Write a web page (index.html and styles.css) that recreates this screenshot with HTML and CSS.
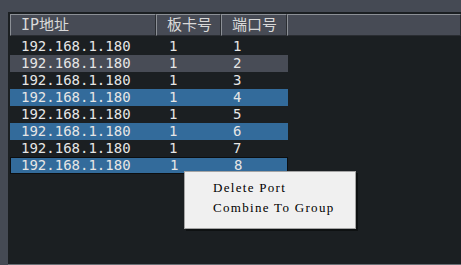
FILE: index.html
```html
<!DOCTYPE html>
<html lang="zh">
  <head>
    <meta charset="UTF-8" />
    <title>Port List</title>
    <link rel="stylesheet" href="styles.css">
  </head>
  <body>
    <div class="panel">
      <div class="head">
        <div class="hcell c-ip">IP地址</div>
        <div class="hcell c-board">板卡号</div>
        <div class="hcell c-port">端口号</div>
        <div class="hcell c-fill"></div>
      </div>

      <div class="rows">
        <div class="row"><span class="c-ip">192.168.1.180</span><span class="c-board">1</span><span class="c-port">1</span></div>
        <div class="row grey"><span class="c-ip">192.168.1.180</span><span class="c-board">1</span><span class="c-port">2</span></div>
        <div class="row"><span class="c-ip">192.168.1.180</span><span class="c-board">1</span><span class="c-port">3</span></div>
        <div class="row sel"><span class="c-ip">192.168.1.180</span><span class="c-board">1</span><span class="c-port">4</span></div>
        <div class="row"><span class="c-ip">192.168.1.180</span><span class="c-board">1</span><span class="c-port">5</span></div>
        <div class="row sel"><span class="c-ip">192.168.1.180</span><span class="c-board">1</span><span class="c-port">6</span></div>
        <div class="row"><span class="c-ip">192.168.1.180</span><span class="c-board">1</span><span class="c-port">7</span></div>
        <div class="row sel focus"><span class="c-ip">192.168.1.180</span><span class="c-board">1</span><span class="c-port">8</span></div>
      </div>
    </div>

    <div class="menu">
      <div class="menu-item">Delete Port</div>
      <div class="menu-item">Combine To Group</div>
    </div>
  </body>
</html>
```

FILE: styles.css
```css
html,
body {
  margin: 0;
  height: 100%;
}

body {
  background-color: #454a54;
  font-family: "DejaVu Sans Mono", "Noto Sans CJK SC", monospace;
  font-size: 14px;
  color: #e6e6e6;
  position: relative;
  overflow: hidden;
}

.panel {
  margin: 12px 0 0 8px;
  height: 253px;
  background-color: #1b1f22;
  border-bottom: 1px solid #6a6e75;
  padding: 2px 0 0 2px;
  box-sizing: border-box;
}

.head {
  display: flex;
  height: 22px;
  margin-bottom: 2px;
}

.hcell {
  background-color: #474b55;
  border-top: 1px solid #8c9096;
  border-left: 1px solid #8c9096;
  border-right: 1px solid #2a2d32;
  border-bottom: 1px solid #2a2d32;
  box-sizing: border-box;
  line-height: 20px;
  padding-left: 10px;
  font-size: 15px;
  color: #d9d9d9;
}

.head .c-ip { width: 146px; }
.head .c-board { width: 65px; }
.head .c-port { width: 66px; }
.head .c-fill { flex: 1; }

.rows {
  width: 278px;
}

.row {
  display: flex;
  height: 17px;
  line-height: 17px;
  box-sizing: border-box;
}

.row span {
  display: block;
}

.row .c-ip {
  width: 146px;
  padding-left: 11px;
  box-sizing: border-box;
}

.row .c-board {
  width: 65px;
  padding-left: 13px;
  box-sizing: border-box;
}

.row .c-port {
  padding-left: 12px;
}

.grey {
  background-color: #484c56;
}

.sel {
  background-color: #336b9b;
}

.focus {
  border: 1px solid #0c0e10;
  line-height: 15px;
}

.focus .c-ip {
  padding-left: 10px;
}

.menu {
  position: absolute;
  left: 184px;
  top: 171px;
  width: 172px;
  height: 58px;
  box-sizing: border-box;
  background-color: #f0f0f0;
  border: 1px solid #a4a4a4;
  box-shadow: 2px 2px 0 rgba(0, 0, 0, 0.45);
  padding-top: 6px;
}

.menu-item {
  height: 20px;
  line-height: 20px;
  padding-left: 28px;
  font-family: "Liberation Serif", serif;
  font-size: 13px;
  letter-spacing: 1.3px;
  color: #000;
}
```
